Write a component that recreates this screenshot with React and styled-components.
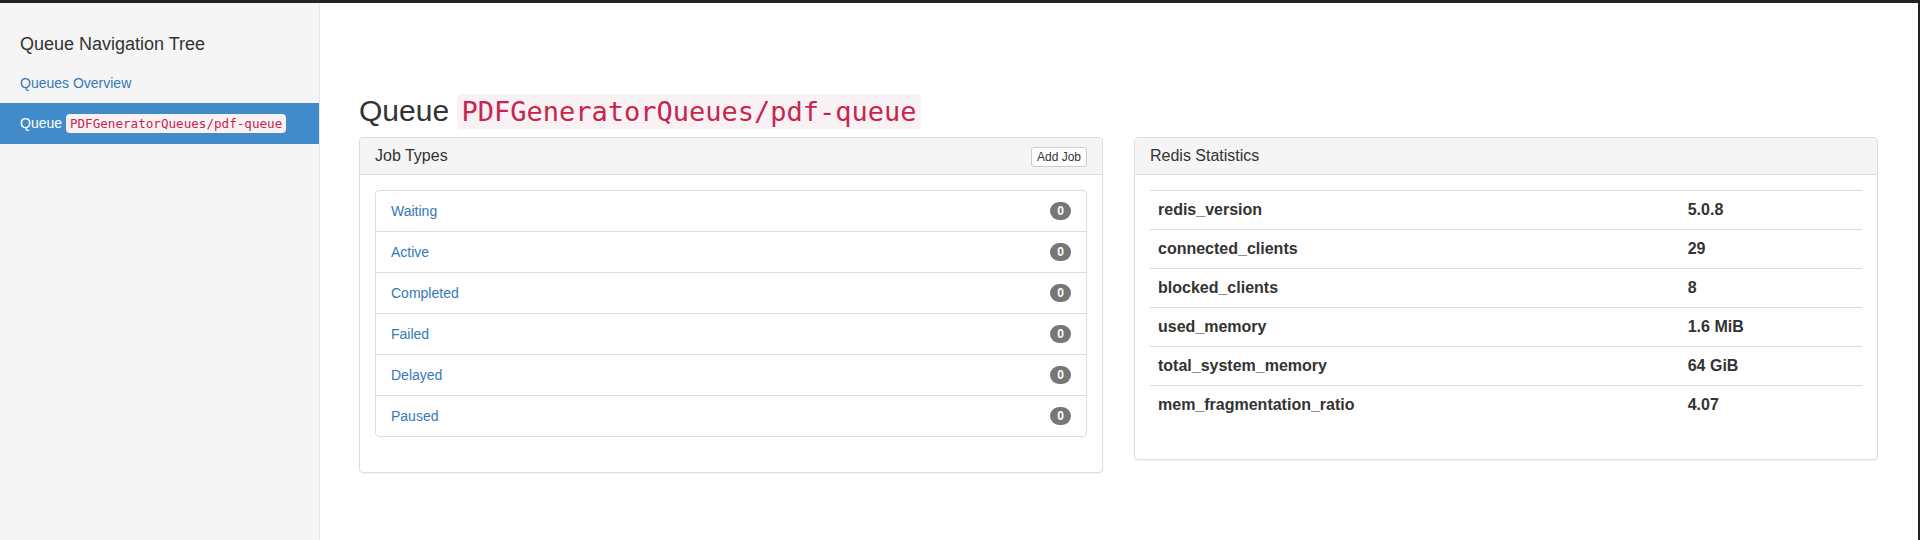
import React from "react";
import styled, { createGlobalStyle } from "styled-components";

const jobTypes = ["Waiting", "Active", "Completed", "Failed", "Delayed", "Paused"];

const stats = [
  { key: "redis_version", value: "5.0.8" },
  { key: "connected_clients", value: "29" },
  { key: "blocked_clients", value: "8" },
  { key: "used_memory", value: "1.6 MiB" },
  { key: "total_system_memory", value: "64 GiB" },
  { key: "mem_fragmentation_ratio", value: "4.07" },
];

const QUEUE = "PDFGeneratorQueues/pdf-queue";

const App = () => {
  return (
    <>
      <GlobalStyle />
      <Page>
        <Sidebar>
          <SidebarTitle>Queue Navigation Tree</SidebarTitle>
          <NavList>
            <li>
              <NavLink href="#">Queues Overview</NavLink>
            </li>
            <li>
              <NavLink href="#" $active>
                Queue <SmallCode>{QUEUE}</SmallCode>
              </NavLink>
            </li>
          </NavList>
        </Sidebar>

        <Main>
          <Heading>
            Queue <BigCode>{QUEUE}</BigCode>
          </Heading>
          <Row>
            <Panel>
              <PanelHeading>
                <PanelTitle>Job Types</PanelTitle>
                <SmallButton>Add Job</SmallButton>
              </PanelHeading>
              <PanelBody>
                <ListGroup>
                  {jobTypes.map((type) => (
                    <ListItem key={type}>
                      <ItemLink href="#">{type}</ItemLink>
                      <Badge>0</Badge>
                    </ListItem>
                  ))}
                </ListGroup>
              </PanelBody>
            </Panel>

            <Panel>
              <PanelHeading>
                <PanelTitle>Redis Statistics</PanelTitle>
              </PanelHeading>
              <PanelBody>
                <StatsTable>
                  <tbody>
                    {stats.map((s) => (
                      <tr key={s.key}>
                        <StatCell $first>{s.key}</StatCell>
                        <StatCell>{s.value}</StatCell>
                      </tr>
                    ))}
                  </tbody>
                </StatsTable>
              </PanelBody>
            </Panel>
          </Row>
        </Main>
      </Page>
    </>
  );
};

const GlobalStyle = createGlobalStyle`
  body {
    margin: 0;
    font-family: "Liberation Sans", Helvetica, Arial, sans-serif;
    font-size: 14px;
    line-height: 1.42857;
    color: #333;
    background: #fff;
  }
  * {
    box-sizing: border-box;
  }
`;

const Page = styled.div`
  display: flex;
  height: 540px;
  border-top: 3px solid #222;
  border-right: 2px solid #222;
`;

const Sidebar = styled.aside`
  width: 320px;
  flex-shrink: 0;
  background: #f5f5f5;
  border-right: 1px solid #e8e8e8;
  padding-top: 31px;
`;

const SidebarTitle = styled.h4`
  margin: 0 0 9px;
  padding: 0 20px;
  font-size: 18px;
  line-height: 20px;
  font-weight: 500;
  color: #333;
`;

const NavList = styled.ul`
  list-style: none;
  margin: 0;
  padding: 0;
`;

const NavLink = styled.a`
  display: block;
  padding: 10px 20px;
  line-height: 20px;
  text-decoration: none;
  color: ${(p) => (p.$active ? "#fff" : "#337ab7")};
  background: ${(p) => (p.$active ? "#428bca" : "transparent")};
`;

const SmallCode = styled.code`
  font-family: "DejaVu Sans Mono", Menlo, monospace;
  font-size: 12.6px;
  padding: 2px 4px;
  border-radius: 4px;
  color: #c7254e;
  background: #f9f2f4;
`;

const Main = styled.main`
  flex: 1;
  padding: 91px 40px 0 39px;
`;

const Heading = styled.h1`
  margin: 0 0 10px;
  font-size: 30px;
  line-height: 1.1;
  font-weight: 500;
  color: #333;
`;

const BigCode = styled.code`
  font-family: "DejaVu Sans Mono", Menlo, monospace;
  font-size: 27px;
  padding: 2px 4px;
  border-radius: 4px;
  color: #c7254e;
  background: #f9f2f4;
`;

const Row = styled.div`
  display: flex;
  align-items: flex-start;
  gap: 31px;
`;

const Panel = styled.section`
  flex: 1;
  min-width: 0;
  background: #fff;
  border: 1px solid #ddd;
  border-radius: 4px;
  box-shadow: 0 1px 1px rgba(0, 0, 0, 0.05);
`;

const PanelHeading = styled.div`
  display: flex;
  justify-content: space-between;
  align-items: center;
  height: 37px;
  padding: 0 15px;
  background: #f5f5f5;
  border-bottom: 1px solid #ddd;
  border-radius: 3px 3px 0 0;
`;

const PanelTitle = styled.h3`
  margin: 0;
  font-size: 16px;
  line-height: 1.1;
  font-weight: 500;
  color: #333;
`;

const SmallButton = styled.button`
  margin-top: 2px;
  font-family: inherit;
  font-size: 12px;
  line-height: 16px;
  padding: 1px 5px;
  color: #333;
  background: #fff;
  border: 1px solid #ccc;
  border-radius: 3px;
  cursor: pointer;
`;

const PanelBody = styled.div`
  padding: 15px;
`;

const ListGroup = styled.ul`
  list-style: none;
  margin: 0 0 20px;
  padding: 0;
`;

const ListItem = styled.li`
  display: flex;
  justify-content: space-between;
  align-items: center;
  padding: 10px 15px;
  line-height: 20px;
  border: 1px solid #ddd;
  margin-bottom: -1px;

  &:first-child {
    border-radius: 4px 4px 0 0;
  }
  &:last-child {
    margin-bottom: 0;
    border-radius: 0 0 4px 4px;
  }
`;

const ItemLink = styled.a`
  color: #337ab7;
  text-decoration: none;
`;

const Badge = styled.span`
  display: inline-block;
  min-width: 10px;
  padding: 3px 7px;
  font-size: 12px;
  font-weight: 700;
  line-height: 1;
  color: #fff;
  background: #777;
  border-radius: 10px;
`;

const StatsTable = styled.table`
  width: 100%;
  border-collapse: collapse;
  margin-bottom: 20px;
`;

const StatCell = styled.td`
  width: ${(p) => (p.$first ? "74.4%" : "auto")};
  padding: 8px;
  font-size: 16px;
  line-height: 22px;
  font-weight: 700;
  color: #333;
  text-align: left;
  border-top: 1px solid #ddd;
`;

export default App;
